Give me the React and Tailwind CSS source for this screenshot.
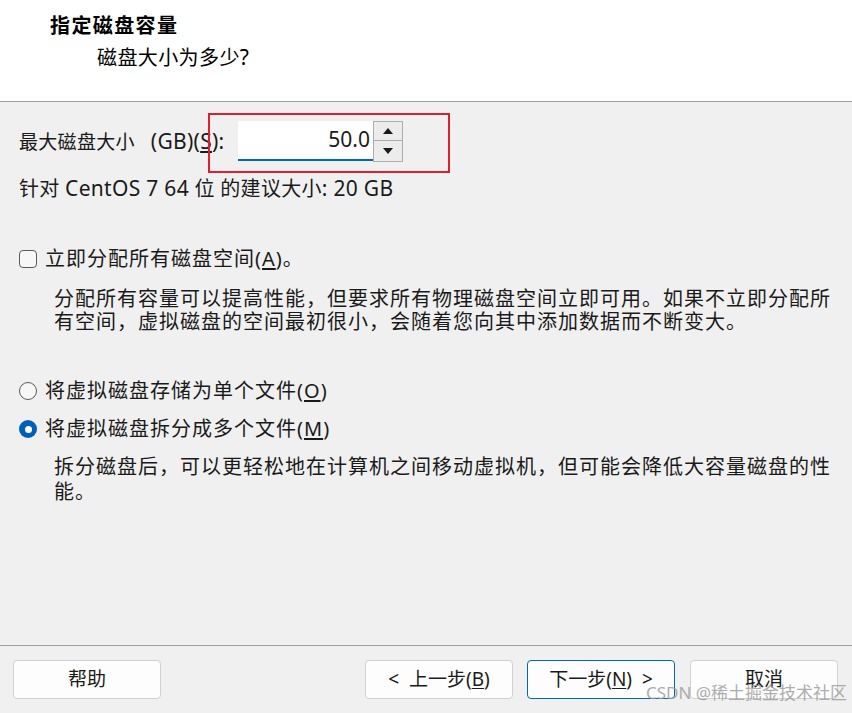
import React from "react";

const FONT = { fontFamily: "'Segoe UI', 'Noto Sans', 'Noto Sans CJK SC', sans-serif" };

function Btn({ children, primary, className = "" }) {
  return (
    <div
      className={
        "flex h-[39px] w-[148px] items-center justify-center rounded-[4px] bg-[#fdfdfd] text-[19px] text-[#1a1a1a] " +
        (primary ? "border border-[#0067c0] " : "border border-[#d0d0d0] ") +
        className
      }
    >
      {children}
    </div>
  );
}

function L({ children, className = "" }) {
  return <span className={"text-[21px] " + className}>{children}</span>;
}

export default function App() {
  return (
    <div style={FONT} className="relative flex h-[713px] w-[852px] flex-col overflow-hidden bg-[#f0f0f0] text-[#1a1a1a]">
      {/* header */}
      <div className="h-[102px] shrink-0 border-b border-[#a0a0a0] bg-white">
        <div className="pl-[50px] pt-[12px] text-[20px] font-bold leading-[28px] tracking-[1.4px] text-black">指定磁盘容量</div>
        <div className="pl-[97px] pt-[3px] text-[20px] leading-[28px] tracking-[0.4px] text-black">
          磁盘大小为多少<span className="text-[21px]">?</span>
        </div>
      </div>

      {/* body */}
      <div className="flex flex-1 flex-col pl-[19px]">
        <div className="mt-[19px] flex h-[41px] items-center">
          <span className="w-[219px] whitespace-nowrap text-[19px] leading-[28px] tracking-[0.3px]">
            最大磁盘大小<L className="ml-[16px]">(GB)(<span className="underline underline-offset-2">S</span>):</L>
          </span>
          <div className="flex h-[41px] items-start">
            <div className="flex h-[40px] w-[135px] items-center justify-end border-b-2 border-[#0067c0] bg-white pr-[3px] text-[21px]">
              50.0
            </div>
            <div className="flex w-[30px] flex-col">
              <div className="flex h-[20px] items-center justify-center border border-[#adadad] bg-[#ececec]">
                <svg width="10" height="6" viewBox="0 0 10 6"><path d="M5 0 L10 6 L0 6 Z" fill="#1a1a1a" /></svg>
              </div>
              <div className="flex h-[21px] items-center justify-center border border-t-0 border-[#adadad] bg-[#ececec]">
                <svg width="10" height="6" viewBox="0 0 10 6"><path d="M0 0 L10 0 L5 6 Z" fill="#1a1a1a" /></svg>
              </div>
            </div>
          </div>
        </div>
        <div className="mt-[12px] whitespace-nowrap text-[20px] leading-[28px] tracking-[0.3px]">
          针对 <L>CentOS 7 64</L> 位 的建议大小<L>: 20 GB</L>
        </div>

        <div className="mt-[42px] flex items-center">
          <div className="h-[18px] w-[18px] rounded-[4px] border border-[#5a5a5a] bg-[#f7f7f7]"></div>
          <span className="ml-[8px] text-[20px] leading-[28px] tracking-[1px]">
            立即分配所有磁盘空间(<span className="underline underline-offset-2">A</span>)。
          </span>
        </div>
        <div className="mt-[14px] whitespace-nowrap pl-[35px] text-[20px] leading-[23px] tracking-[1px]">
          <div>分配所有容量可以提高性能，但要求所有物理磁盘空间立即可用。如果不立即分配所</div>
          <div>有空间，虚拟磁盘的空间最初很小，会随着您向其中添加数据而不断变大。</div>
        </div>

        <div className="mt-[44px] flex items-center">
          <div className="h-[18px] w-[18px] rounded-full border border-[#5a5a5a] bg-[#f7f7f7]"></div>
          <span className="ml-[8px] text-[20px] leading-[28px] tracking-[1px]">
            将虚拟磁盘存储为单个文件(<span className="underline underline-offset-2">O</span>)
          </span>
        </div>
        <div className="mt-[10px] flex items-center">
          <div className="flex h-[18px] w-[18px] items-center justify-center rounded-full bg-[#005fb8]">
            <div className="h-[7px] w-[7px] rounded-full bg-white"></div>
          </div>
          <span className="ml-[8px] text-[20px] leading-[28px] tracking-[1px]">
            将虚拟磁盘拆分成多个文件(<span className="underline underline-offset-2">M</span>)
          </span>
        </div>
        <div className="mt-[11px] whitespace-nowrap pl-[35px] text-[20px] leading-[25px] tracking-[1px]">
          <div>拆分磁盘后，可以更轻松地在计算机之间移动虚拟机，但可能会降低大容量磁盘的性</div>
          <div>能。</div>
        </div>
      </div>

      {/* footer */}
      <div className="h-[68px] shrink-0 border-t border-[#a0a0a0] bg-[#f0f0f0]">
        <div className="flex pt-[14px]">
          <Btn className="ml-[13px]">帮助</Btn>
          <Btn className="ml-[204px]">
            &lt;&nbsp;&nbsp;上一步(<span className="underline underline-offset-2">B</span>)
          </Btn>
          <Btn primary className="ml-[14px]">
            下一步(<span className="underline underline-offset-2">N</span>)&nbsp;&nbsp;&gt;
          </Btn>
          <Btn className="ml-[15px]">取消</Btn>
        </div>
      </div>

      {/* red annotation box */}
      <div className="pointer-events-none absolute left-[208px] top-[113px] h-[60px] w-[242px] border-2 border-[#dc2030]"></div>

      {/* watermark */}
      <div className="pointer-events-none absolute left-[646px] top-[681px] whitespace-nowrap text-[17px] leading-[24px] text-[#9a9a9a] opacity-80">
        CSDN @稀土掘金技术社区
      </div>
    </div>
  );
}
